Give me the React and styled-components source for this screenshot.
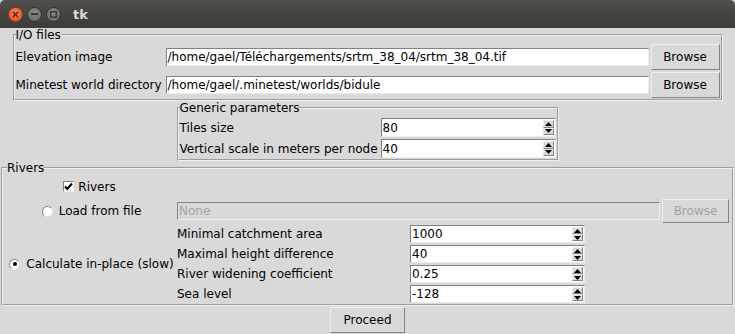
import React from 'react'
import styled, { createGlobalStyle } from 'styled-components'

const GlobalStyle = createGlobalStyle`
html, body {
  margin: 0;
  padding: 0;
  background: #cfcfcf;
}
body {
  font-family: "DejaVu Sans", "Liberation Sans", sans-serif;
  font-size: 12px;
  color: #000;
}
`

const Window = styled.div`
width: 735px;
height: 334px;
overflow: hidden;
display: flex;
flex-direction: column;
`

const TitleBar = styled.div`
height: 28px;
flex: none;
display: flex;
align-items: center;
padding-left: 8px;
gap: 4px;
background: linear-gradient(#514f4b, #3c3b37);
border-radius: 5px 5px 0 0;
`

const WinButton = styled.div`
box-sizing: border-box;
width: 15px;
height: 15px;
border-radius: 50%;
display: flex;
align-items: center;
justify-content: center;
border: 1px solid ${props => props.close ? '#9c3a1a' : '#33322e'};
background: ${props => props.close
    ? 'radial-gradient(circle at 50% 35%, #f7875d, #e0471b)'
    : 'radial-gradient(circle at 50% 35%, #8c8b86, #666561)'};
`

const Title = styled.div`
margin-left: 8px;
font-family: "DejaVu Sans", sans-serif;
font-weight: bold;
font-size: 13px;
color: #dfdbd2;
`

const Body = styled.div`
flex: 1;
display: flex;
flex-direction: column;
align-items: center;
background: #d9d9d9;
`

const Frame = styled.fieldset`
box-sizing: border-box;
width: ${props => props.w}px;
margin: 0;
padding: ${props => props.pt}px 0 0 ${props => props.pl}px;
border: 2px groove #f0f0f0;
min-inline-size: 0;
`

const Legend = styled.legend`
padding: 0;
margin-left: ${props => props.ml || 0}px;
height: 14px;
line-height: 14px;
font-size: 12px;
`

const Grid = styled.div`
display: grid;
grid-template-columns: ${props => props.cols};
grid-template-rows: ${props => props.rows};
align-items: center;
`

const Label = styled.div`
white-space: nowrap;
line-height: 14px;
padding-left: ${props => props.pl || 0}px;
`

const Entry = styled.div`
box-sizing: border-box;
height: 18px;
margin: 0 1px;
padding: 0 1px;
line-height: 16px;
white-space: nowrap;
overflow: hidden;
background: ${props => props.disabled ? '#d9d9d9' : '#ffffff'};
color: ${props => props.disabled ? '#a3a3a3' : '#000'};
border: 1px solid;
border-color: #828282 #ececec #ececec #828282;
grid-column: ${props => props.span || 'auto'};
`

const Button = styled.div`
box-sizing: border-box;
height: ${props => props.h || 26}px;
width: ${props => props.w ? `${props.w}px` : 'auto'};
margin: 1px;
display: flex;
align-items: center;
justify-content: center;
background: #d9d9d9;
border: 1px solid;
border-color: #ececec #828282 #828282 #ececec;
color: ${props => props.disabled ? '#a3a3a3' : '#000'};
white-space: nowrap;
`

const Spin = styled.div`
box-sizing: border-box;
width: 175px;
height: ${props => props.h}px;
margin: 0 1px;
display: flex;
background: #fff;
border: 1px solid;
border-color: #828282 #ececec #ececec #828282;
`

const SpinText = styled.div`
flex: 1;
display: flex;
align-items: center;
padding-left: 1px;
`

const Arrows = styled.div`
width: 11px;
display: flex;
flex-direction: column;
padding: 1px 1px 1px 0;
`

const Arrow = styled.div`
flex: 1;
display: flex;
align-items: center;
justify-content: center;
background: #d9d9d9;
border: 1px solid;
border-color: #ececec #828282 #828282 #ececec;
`

const Check = styled.div`
justify-self: center;
display: flex;
align-items: center;
gap: 4px;
`

const CheckBox = styled.span`
box-sizing: border-box;
width: 11px;
height: 11px;
display: flex;
align-items: center;
justify-content: center;
background: #fff;
border: 1px solid;
border-color: #828282 #ececec #ececec #828282;
`

const Radio = styled.div`
justify-self: center;
display: flex;
align-items: center;
gap: 6px;
padding-left: 4px;
grid-row: ${props => props.row || 'auto'};
`

const RadioDot = styled.span`
box-sizing: border-box;
width: 11px;
height: 11px;
border-radius: 50%;
display: flex;
align-items: center;
justify-content: center;
background: #fff;
border: 1px solid;
border-color: #8a8a8a #e6e6e6 #e6e6e6 #8a8a8a;
&::after {
  content: "";
  width: 4px;
  height: 4px;
  border-radius: 50%;
  background: ${props => props.on ? '#000' : 'transparent'};
}
`

const Footer = styled.div`
display: flex;
justify-content: center;
`

const SpinBox = ({ value, h }) => (
    <Spin h={h}>
        <SpinText>{value}</SpinText>
        <Arrows>
            <Arrow>
                <svg width="7" height="4" viewBox="0 0 7 4"><path d="M0 4 L3.5 0 L7 4 Z" fill="#000" /></svg>
            </Arrow>
            <Arrow>
                <svg width="7" height="4" viewBox="0 0 7 4"><path d="M0 0 L3.5 4 L7 0 Z" fill="#000" /></svg>
            </Arrow>
        </Arrows>
    </Spin>
)

const riverParams = [
    ['Minimal catchment area', '1000'],
    ['Maximal height difference', '40'],
    ['River widening coefficient', '0.25'],
    ['Sea level', '-128'],
]

const App = () => {
    return (
        <Window>
            <GlobalStyle />
            <TitleBar>
                <WinButton close>
                    <svg width="7" height="7" viewBox="0 0 7 7">
                        <path d="M1 1 L6 6 M6 1 L1 6" stroke="#4a1f10" strokeWidth="1.3" />
                    </svg>
                </WinButton>
                <WinButton>
                    <svg width="7" height="2" viewBox="0 0 7 2"><rect width="7" height="2" fill="#3c3b37" /></svg>
                </WinButton>
                <WinButton>
                    <svg width="7" height="7" viewBox="0 0 7 7">
                        <rect x="0.75" y="0.75" width="5.5" height="5.5" fill="none" stroke="#3c3b37" strokeWidth="1.5" />
                    </svg>
                </WinButton>
                <Title>tk</Title>
            </TitleBar>
            <Body>
                <Frame w={710} pt={1} pl={1}>
                    <Legend>I/O files</Legend>
                    <Grid cols="149px 485px 71px" rows="28px 28px">
                        <Label>Elevation image</Label>
                        <Entry>/home/gael/Téléchargements/srtm_38_04/srtm_38_04.tif</Entry>
                        <Button>Browse</Button>
                        <Label>Minetest world directory</Label>
                        <Entry>/home/gael/.minetest/worlds/bidule</Entry>
                        <Button>Browse</Button>
                    </Grid>
                </Frame>
                <Frame w={382} pt={2} pl={1}>
                    <Legend>Generic parameters</Legend>
                    <Grid cols="200px 177px" rows="21px 21px">
                        <Label>Tiles size</Label>
                        <SpinBox value="80" h={19} />
                        <Label>Vertical scale in meters per node</Label>
                        <SpinBox value="40" h={19} />
                    </Grid>
                </Frame>
                <Frame w={733} pt={0} pl={0}>
                    <Legend ml={4}>Rivers</Legend>
                    <Grid cols="173px 233px 252px 69px" rows="23px 26px repeat(4, 20px)">
                        <Check style={{ gridColumn: 1 }}>
                            <CheckBox>
                                <svg width="9" height="9" viewBox="0 0 9 9">
                                    <path d="M1 4.5 L3.3 7 L8 1.5" fill="none" stroke="#000" strokeWidth="2" />
                                </svg>
                            </CheckBox>
                            <span>Rivers</span>
                        </Check>
                        <div />
                        <div />
                        <div />
                        <Radio>
                            <RadioDot />
                            <span>Load from file</span>
                        </Radio>
                        <Entry disabled span="2 / span 2">None</Entry>
                        <Button h={24} disabled>Browse</Button>
                        <Radio row="3 / span 4">
                            <RadioDot on />
                            <span>Calculate in-place (slow)</span>
                        </Radio>
                        {riverParams.map(([name, value], i) => (
                            <React.Fragment key={name}>
                                <Label pl={1} style={{ gridRow: i + 3, gridColumn: 2 }}>{name}</Label>
                                <div style={{ gridRow: i + 3, gridColumn: 3 }}>
                                    <SpinBox value={value} h={18} />
                                </div>
                            </React.Fragment>
                        ))}
                    </Grid>
                </Frame>
                <Footer>
                    <Button w={75}>Proceed</Button>
                </Footer>
            </Body>
        </Window>
    )
}

export default App
